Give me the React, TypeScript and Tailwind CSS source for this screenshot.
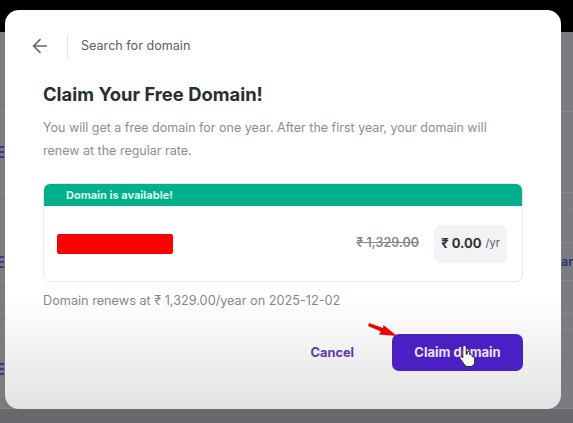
import { ArrowLeft } from "lucide-react";

const font = { fontFamily: '"Inter", "DejaVu Sans", sans-serif' };

const rows = [
  { h: "h-[80px]", icon: false, label: false },
  { h: "h-[81px]", icon: true, label: false },
  { h: "h-[17px]", icon: false, label: false },
  { h: "h-[33px]", icon: false, label: false },
  { h: "h-[38px]", icon: true, label: true },
  { h: "h-[33px]", icon: false, label: false },
  { h: "h-[16px]", icon: false, label: false },
  { h: "h-[79px]", icon: true, label: false },
];

const Backdrop = () => {
  return (
    <div className="flex h-full w-full flex-col bg-[#7b7c7f]">
      <div className="h-[32px] w-full bg-black" />
      {rows.map((r, i) => (
        <div key={i} className={`${r.h} flex w-full items-center justify-between border-b border-[#85868a]`}>
          {r.icon ? (
            <div className="flex w-[4px] flex-col gap-[3px]">
              <div className="h-[2px] bg-[#43329a]" />
              <div className="h-[2px] bg-[#43329a]" />
              <div className="h-[2px] bg-[#43329a]" />
            </div>
          ) : (
            <div />
          )}
          {r.label ? <span className="text-[12px] font-semibold text-[#35297a]">ar</span> : null}
        </div>
      ))}
      <div className="flex-1 bg-[#68696d]" />
    </div>
  );
};

const HandCursor = () => {
  return (
    <svg width="20" height="24" viewBox="0 0 20 24" className="absolute left-[458px] top-[344px]">
      <path
        d="M6.5 1.5c1 0 1.700.8 1.700 1.800v7l1-.2V7.800c1.500-.6 2.400 0 2.500 1.200v1.600c1.400-.5 2.400 0 2.500 1.200v1c1.400-.4 2.300.2 2.400 1.400v4c0 2.700-2 4.300-4.500 4.300H10c-2 0-3-1-4-2.500L2 14.500c-.8-1.300.8-2.600 2-1.500l.8.9V3.300c0-1 .7-1.800 1.700-1.800z"
        fill="#fff"
        stroke="#2a2a33"
        strokeWidth="1"
      />
    </svg>
  );
};

const RedArrow = () => {
  return (
    <svg width="32" height="18" viewBox="0 0 32 18" className="absolute left-[367px] top-[322px]">
      <path d="M2 1L16 6l.5-3L30 14l-18-1.500 2-3L1 4z" fill="#f00000" />
    </svg>
  );
};

const DomainCard = () => {
  return (
    <div className="mt-[21px] overflow-hidden rounded-[7px] border border-[#e6e8ea] bg-white">
      <div className="h-[22px] bg-[#00b08c] pl-[22px] text-[11px] font-bold leading-[22px] text-[#d9fbee]">
        Domain is available!
      </div>
      <div className="flex h-[75px] items-center justify-between pl-[13px] pr-[15px]">
        <div className="mt-[1px] h-[20px] w-[116px] rounded-[2px] bg-[#ff0000]" />
        <div className="flex items-center gap-[15px]">
          <span className="text-[12.5px] font-semibold text-[#85878c] line-through">₹ 1,329.00</span>
          <div className="flex h-[38px] w-[73px] items-center justify-center gap-[4px] rounded-[7px] bg-[#f2f3f5]">
            <span className="text-[13px] font-bold text-[#2f3138]">₹ 0.00</span>
            <span className="text-[11px] text-[#55575e]">/yr</span>
          </div>
        </div>
      </div>
    </div>
  );
};

export default function App() {
  return (
    <div className="relative h-[423px] w-[573px] overflow-hidden" style={font}>
      <Backdrop />
      <div className="absolute left-[5px] top-[10px] flex h-[399px] w-[556px] flex-col rounded-[14px] bg-gradient-to-b from-white from-[72%] to-[#e3e3e3] px-[38px]">
        <div className="-ml-[14px] mt-[24px] flex h-[24px] items-center">
          <ArrowLeft size={22} strokeWidth={1.75} className="text-[#63656e]" />
          <div className="ml-[16px] h-[24px] w-px bg-[#e4e5e8]" />
          <span className="ml-[13px] text-[12.6px] text-[#5b5d66]">Search for domain</span>
        </div>
        <h1 className="mt-[24px] text-[18.4px] font-bold leading-[24px] text-[#2b2d35]">
          Claim Your Free Domain!
        </h1>
        <p className="mt-[10px] w-[470px] text-[12.5px] leading-[23px] text-[#8b8d94]">
          You will get a free domain for one year. After the first year, your domain will renew at the regular rate.
        </p>
        <DomainCard />
        <p className="mt-[10px] text-[12.7px] leading-[18px] text-[#85878e]">
          Domain renews at ₹ 1,329.00/year on 2025-12-02
        </p>
        <div className="mt-[24px] flex items-center justify-end gap-[38px]">
          <span className="text-[12.8px] font-bold text-[#5a3bb5]">Cancel</span>
          <button className="h-[37px] w-[131px] rounded-[7px] bg-[#4a20c5] text-[13px] font-bold text-[#e9e4fa]">
            Claim domain
          </button>
        </div>
      </div>
      <RedArrow />
      <HandCursor />
    </div>
  );
}
